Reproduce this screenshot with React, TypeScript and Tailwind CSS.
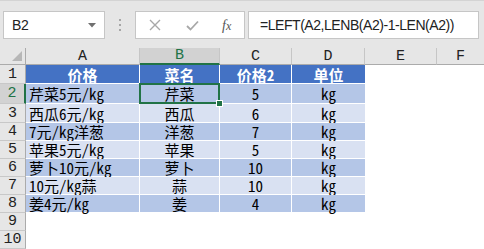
const cellFont = {
  fontFamily: '"Noto Sans Mono CJK SC", "Liberation Mono", "Noto Sans CJK SC", monospace',
};

const headFont = {
  fontFamily: '"Liberation Mono", "Noto Sans Mono CJK SC", monospace',
};

type RowData = { a: string; b: string; c: string; d: string };

const rows: RowData[] = [
  { a: "芹菜5元/kg", b: "芹菜", c: "5", d: "kg" },
  { a: "西瓜6元/kg", b: "西瓜", c: "6", d: "kg" },
  { a: "7元/kg洋葱", b: "洋葱", c: "7", d: "kg" },
  { a: "苹果5元/kg", b: "苹果", c: "5", d: "kg" },
  { a: "萝卜10元/kg", b: "萝卜", c: "10", d: "kg" },
  { a: "10元/kg蒜", b: "蒜", c: "10", d: "kg" },
  { a: "姜4元/kg", b: "姜", c: "4", d: "kg" },
];

const heights = ["h-[20px]", "h-[19px]", "h-[18px]", "h-[18px]", "h-[18px]", "h-[18px]", "h-[18px]"];

const RowHead = ({ n, h, active }: { n: number; h: string; active?: boolean }) => (
  <div
    className={`${h} w-[26px] shrink-0 flex items-center justify-center text-[15px] leading-none border-b border-[#c8c8c8] ${
      active
        ? "bg-[#d2d2d2] text-[#217346] border-r-2 border-r-[#217346]"
        : "bg-[#e6e6e6] text-[#222] border-r border-r-[#ababab]"
    }`}
    style={headFont}
  >
    {n}
  </div>
);

export default function App() {
  return (
    <div className="w-[484px] h-[249px] overflow-hidden bg-white">
      {/* formula bar */}
      <div className="h-[48px] bg-[#e6e6e6] border-t border-[#d4d4d4] flex items-start pt-[10px] pl-[3px]">
        <div className="w-[102px] h-[28px] bg-white border border-[#c6c6c6] flex items-center justify-between pl-[8px] pr-[8px]">
          <span className="text-[14px] text-[#222] tracking-[-0.3px]" style={{ fontFamily: '"Liberation Sans", sans-serif' }}>
            B2
          </span>
          <svg width="8" height="5" viewBox="0 0 8 5">
            <path d="M0 0 L8 0 L4 4.5 Z" fill="#707070" />
          </svg>
        </div>
        <div className="w-[30px] h-[28px] flex flex-col items-center justify-center gap-[3px]">
          <span className="w-[2px] h-[2px] bg-[#a6a6a6]" />
          <span className="w-[2px] h-[2px] bg-[#a6a6a6]" />
          <span className="w-[2px] h-[2px] bg-[#a6a6a6]" />
        </div>
        <div className="w-[110px] h-[28px] bg-white border border-[#c6c6c6] flex items-center pl-[13px]">
          <svg width="12" height="12" viewBox="0 0 12 12">
            <path d="M1 1 L11 11 M11 1 L1 11" stroke="#a8a8a8" strokeWidth="1.4" />
          </svg>
          <svg className="ml-[25px]" width="13" height="11" viewBox="0 0 13 11">
            <path d="M1 6 L4.5 9.5 L12 1.5" stroke="#a8a8a8" strokeWidth="1.8" fill="none" />
          </svg>
          <span
            className="ml-[23px] italic text-[14px] text-[#555]"
            style={{ fontFamily: '"Liberation Serif", serif' }}
          >
            f<span className="text-[12px]">x</span>
          </span>
        </div>
        <div className="ml-[3px] w-[231px] h-[28px] bg-white border border-[#c6c6c6] flex items-center pl-[11px]">
          <span
            className="text-[14px] text-[#222] tracking-[-0.45px]"
            style={{ fontFamily: '"Liberation Sans", sans-serif' }}
          >
            =LEFT(A2,LENB(A2)-1-LEN(A2))
          </span>
        </div>
      </div>

      {/* column headers */}
      <div className="flex h-[17px] text-[15px] leading-none text-[#222]" style={headFont}>
        <div className="w-[26px] shrink-0 bg-[#e6e6e6] border-r border-b border-[#ababab] relative">
          <svg className="absolute right-[3px] bottom-[3px]" width="10" height="10" viewBox="0 0 10 10">
            <path d="M10 0 L10 10 L0 10 Z" fill="#b7b7b7" />
          </svg>
        </div>
        <div className="w-[114px] shrink-0 bg-[#e6e6e6] border-r border-r-[#c6c6c6] border-b border-b-[#ababab] flex items-center justify-center">A</div>
        <div className="w-[80px] shrink-0 bg-[#d2d2d2] border-r border-r-[#c6c6c6] border-b-2 border-b-[#217346] text-[#217346] flex items-center justify-center">B</div>
        <div className="w-[72px] shrink-0 bg-[#e6e6e6] border-r border-r-[#c6c6c6] border-b border-b-[#ababab] flex items-center justify-center">C</div>
        <div className="w-[73px] shrink-0 bg-[#e6e6e6] border-r border-r-[#c6c6c6] border-b border-b-[#ababab] flex items-center justify-center">D</div>
        <div className="w-[72px] shrink-0 bg-[#e6e6e6] border-r border-r-[#c6c6c6] border-b border-b-[#ababab] flex items-center justify-center">E</div>
        <div className="flex-1 bg-[#e6e6e6] border-b border-b-[#ababab] flex items-center justify-center">F</div>
      </div>

      {/* header row 1 */}
      <div className="flex h-[19px] text-[15px] leading-none" style={cellFont}>
        <RowHead n={1} h="h-[19px]" />
        <div className="w-[114px] shrink-0 bg-[#4472c4] text-white font-bold border-r border-b border-white flex items-center justify-center">价格</div>
        <div className="w-[80px] shrink-0 bg-[#4472c4] text-white font-bold border-r border-b border-white flex items-center justify-center">菜名</div>
        <div className="w-[72px] shrink-0 bg-[#4472c4] text-white font-bold border-r border-b border-white flex items-center justify-center">价格2</div>
        <div className="w-[73px] shrink-0 bg-[#4472c4] text-white font-bold border-b border-white flex items-center justify-center">单位</div>
        <div className="flex-1" />
      </div>

      {rows.map((r, i) => {
        const bg = i % 2 === 0 ? "bg-[#b4c6e7]" : "bg-[#d9e1f2]";
        const h = heights[i];
        return (
          <div key={i} className={`flex ${h} text-[15px] leading-none text-black`} style={cellFont}>
            <RowHead n={i + 2} h={h} active={i === 0} />
            <div className={`w-[114px] shrink-0 ${bg} border-r border-b border-white flex items-center pl-[3px] whitespace-nowrap`}>
              {r.a}
            </div>
            <div className={`w-[80px] shrink-0 ${bg} border-r border-b border-white flex items-center justify-center relative`}>
              {r.b}
              {i === 0 && (
                <div className="absolute z-10 -left-[1px] -top-[1px] -right-[1px] -bottom-[1px] border-2 border-[#217346]">
                  <div className="absolute -right-[5px] -bottom-[5px] w-[7px] h-[7px] bg-[#217346] border border-white" />
                </div>
              )}
            </div>
            <div className={`w-[72px] shrink-0 ${bg} border-r border-b border-white flex items-center justify-center`}>{r.c}</div>
            <div className={`w-[73px] shrink-0 ${bg} border-b border-white flex items-center justify-center`}>{r.d}</div>
            <div className="flex-1" />
          </div>
        );
      })}

      <div className="flex h-[18px]">
        <RowHead n={9} h="h-[18px]" />
      </div>
      <div className="flex h-[18px]">
        <RowHead n={10} h="h-[18px]" />
      </div>
    </div>
  );
}
